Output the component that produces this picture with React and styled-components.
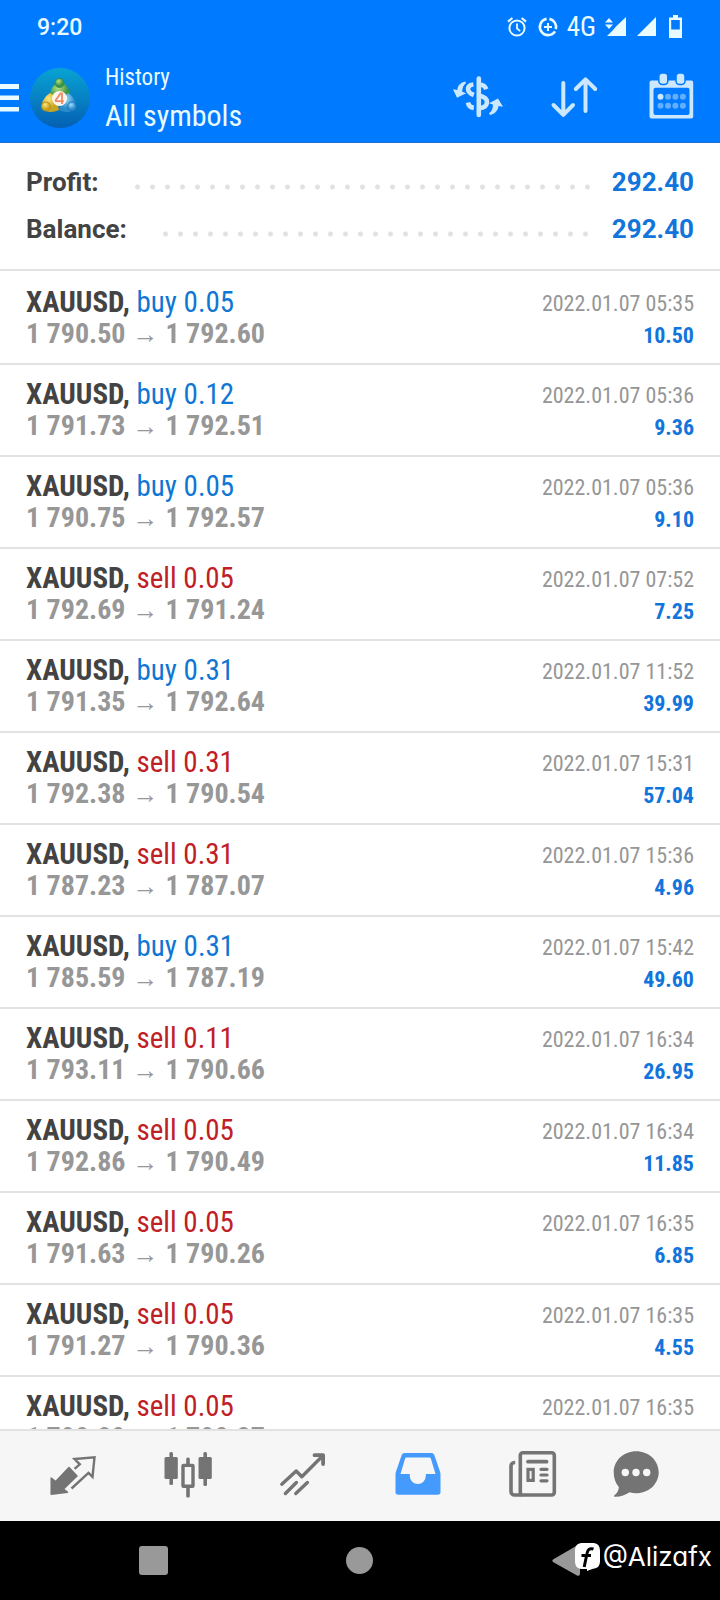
import React from "react";
import styled, { createGlobalStyle } from "styled-components";

const deals = [
  { side: "buy", volume: "0.05", open: "1 790.50", close: "1 792.60", time: "2022.01.07 05:35", profit: "10.50" },
  { side: "buy", volume: "0.12", open: "1 791.73", close: "1 792.51", time: "2022.01.07 05:36", profit: "9.36" },
  { side: "buy", volume: "0.05", open: "1 790.75", close: "1 792.57", time: "2022.01.07 05:36", profit: "9.10" },
  { side: "sell", volume: "0.05", open: "1 792.69", close: "1 791.24", time: "2022.01.07 07:52", profit: "7.25" },
  { side: "buy", volume: "0.31", open: "1 791.35", close: "1 792.64", time: "2022.01.07 11:52", profit: "39.99" },
  { side: "sell", volume: "0.31", open: "1 792.38", close: "1 790.54", time: "2022.01.07 15:31", profit: "57.04" },
  { side: "sell", volume: "0.31", open: "1 787.23", close: "1 787.07", time: "2022.01.07 15:36", profit: "4.96" },
  { side: "buy", volume: "0.31", open: "1 785.59", close: "1 787.19", time: "2022.01.07 15:42", profit: "49.60" },
  { side: "sell", volume: "0.11", open: "1 793.11", close: "1 790.66", time: "2022.01.07 16:34", profit: "26.95" },
  { side: "sell", volume: "0.05", open: "1 792.86", close: "1 790.49", time: "2022.01.07 16:34", profit: "11.85" },
  { side: "sell", volume: "0.05", open: "1 791.63", close: "1 790.26", time: "2022.01.07 16:35", profit: "6.85" },
  { side: "sell", volume: "0.05", open: "1 791.27", close: "1 790.36", time: "2022.01.07 16:35", profit: "4.55" },
  { side: "sell", volume: "0.05", open: "1 790.89", close: "1 790.37", time: "2022.01.07 16:35", profit: "2.60" },
];

const AlarmIcon = () => (
  <svg width="20" height="22" viewBox="0 0 20 22" fill="none" stroke="currentColor" strokeWidth="2">
    <circle cx="10" cy="12" r="7.6" />
    <path d="M10 7.5v5l3.2 2.6" strokeWidth="1.8" />
    <path d="M1 5.6 5.4 2M19 5.6 14.6 2" strokeWidth="2.2" />
  </svg>
);

const DataSaverIcon = () => (
  <svg width="20" height="20" viewBox="0 0 20 20" fill="none" stroke="currentColor">
    <path d="M8.6 1.9A8.2 8.2 0 1 0 17 14.4" strokeWidth="2.6" />
    <path d="M11.4 1.9a8.2 8.2 0 0 1 6.4 10.2" strokeWidth="2.6" />
    <path d="M10 6v8M6 10h8" strokeWidth="2" />
  </svg>
);

const SignalIcon = ({ arrows }) => (
  <svg width={arrows ? 21 : 20} height="20" viewBox={arrows ? "0 0 21 20" : "0 0 20 20"} fill="currentColor">
    {arrows ? (
      <>
        <path d="M21 0v19H2l5.6-5.4L11 9.6Z" />
        <path d="M0 5.6 4 1 8 5.6ZM0 7.400h8L4 12Z" />
      </>
    ) : (
      <path d="M19 0v19H0Z" />
    )}
  </svg>
);

const BatteryIcon = () => (
  <svg width="15" height="24" viewBox="0 0 15 24" fill="currentColor">
    <path fillRule="evenodd" d="M5 0h5v2.500h4V23H1V2.500h4ZM3.200 5v9.500h8.600V5Z" />
  </svg>
);

const MenuIcon = () => (
  <svg width="19" height="28" viewBox="0 0 19 28" fill="currentColor">
    <path d="M0 0h19v5H0ZM0 11.500h19v4.500H0ZM0 23h19v4.500H0Z" />
  </svg>
);

const Logo = () => (
  <svg width="60" height="60" viewBox="0 0 60 60">
    <defs>
      <linearGradient id="sky" x1="0" y1="0" x2="0" y2="1">
        <stop offset="0" stopColor="#08a3d3" />
        <stop offset="1" stopColor="#0560b4" />
      </linearGradient>
      <radialGradient id="green" cx="0.4" cy="0.3">
        <stop offset="0" stopColor="#b5e08a" />
        <stop offset="1" stopColor="#3d9442" />
      </radialGradient>
      <radialGradient id="gold" cx="0.4" cy="0.3">
        <stop offset="0" stopColor="#fbe77a" />
        <stop offset="1" stopColor="#c9a424" />
      </radialGradient>
      <radialGradient id="blue" cx="0.4" cy="0.3">
        <stop offset="0" stopColor="#9fdcf8" />
        <stop offset="1" stopColor="#2a8ccb" />
      </radialGradient>
    </defs>
    <circle cx="30" cy="30" r="30" fill="url(#sky)" />
    <path d="M20 29c0-9 4-14 10-14s10 5 10 14l-10 3Z" fill="url(#green)" />
    <circle cx="29.500" cy="15" r="4.500" fill="url(#green)" stroke="#2c8a4a" strokeWidth="0.8" />
    <path d="M20 25c-6 4-9 10-8 14 3 6 10 6 17 3l-3-14Z" fill="url(#gold)" />
    <circle cx="16" cy="38.500" r="4.500" fill="url(#gold)" stroke="#b08a18" strokeWidth="0.8" />
    <path d="M38 25c6 4 9 10 8 14-3 6-11 6-17 3l3-12Z" fill="url(#blue)" />
    <circle cx="42" cy="38.500" r="4.500" fill="url(#blue)" stroke="#1b6fb5" strokeWidth="0.8" />
    <circle cx="29.500" cy="30.500" r="7.500" fill="#fdf6ef" />
    <path d="M32 36V25.500h-1.500L25.800 32v1.200h8" fill="none" stroke="#ef8a62" strokeWidth="1.800" />
  </svg>
);

const CurrencyIcon = () => (
  <svg width="52" height="48" viewBox="0 0 52 48" fill="none" stroke="currentColor" strokeWidth="4.600">
    <path d="M21.400 10.500C17.500 11 15.800 13 16.100 15.500c.3 2.600 2.400 4.200 5.700 5.500" />
    <path d="M16 28.500c.5 3 2.300 4.900 5.800 5.400" />
    <path d="M26.800 4.500v36.500" strokeLinecap="round" />
    <path d="M27 10.500c4 0 6 1.300 7.300 4.800M27 21.500c5 1.200 8 3 8 6.300 0 4-3 6.200-8 6.500" />
    <g fill="currentColor" stroke="none">
      <path d="M13.500 7.500C8.500 8.500 5.600 11.500 5.300 16L1 15.300 5 23.800l9.200-4.600-4-1.400c0-3.600 1-6.500 3.600-8.600Z" />
      <path d="M38 41c5-1 8-4.500 8.500-9l4.500.8-5-8.300-9 4.800 3.900 1.200c0 4-1 7-3.900 8.800Z" />
    </g>
  </svg>
);

const SortIcon = () => (
  <svg width="48" height="48" viewBox="0 0 48 48" fill="none" stroke="currentColor" strokeWidth="4" strokeLinecap="round" strokeLinejoin="round">
    <path d="M12.300 9v31.500M2.500 31l9.800 9.800L22 31" />
    <path d="M34.500 37V5.500M24.800 15l9.700-9.700L44.200 15" />
  </svg>
);

const CalendarIcon = () => (
  <svg width="48" height="48" viewBox="0 0 48 48">
    <path
      fill="currentColor"
      fillRule="evenodd"
      d="M3.500 6.500h39.700a2 2 0 0 1 2 2v34a2 2 0 0 1-2 2H3.500a2 2 0 0 1-2-2v-34a2 2 0 0 1 2-2ZM7.500 13.800a2 2 0 0 0-2 2V39a2 2 0 0 0 2 2h32a2 2 0 0 0 2-2V15.800a2 2 0 0 0-2-2Z"
    />
    <g fill="currentColor" stroke="#007aff" strokeWidth="1.500">
      <rect x="10.800" y="-1" width="9" height="11.500" rx="3.500" />
      <rect x="28" y="-1" width="9" height="11.500" rx="3.500" />
    </g>
    <circle cx="12.500" cy="22.800" r="3" fill="currentColor" />
    <g fill="#62aeff">
      <circle cx="20" cy="22.800" r="3" />
      <circle cx="27.400" cy="22.800" r="3" />
      <circle cx="34.900" cy="22.800" r="3" />
      <circle cx="12.500" cy="31.800" r="3" />
      <circle cx="20" cy="31.800" r="3" />
      <circle cx="27.400" cy="31.800" r="3" />
      <circle cx="34.900" cy="31.800" r="3" />
    </g>
  </svg>
);

const QuotesIcon = () => (
  <svg width="48" height="48" viewBox="0 0 48 48">
    <path
      fill="currentColor"
      stroke="currentColor"
      strokeWidth="1.500"
      strokeLinejoin="round"
      d="M20 15.500 28 24 14.500 37l4 3.300L2.200 42.200V26l4.500 3.500Z"
    />
    <path
      fill="none"
      stroke="currentColor"
      strokeWidth="2.400"
      d="M22.500 36.500 39.500 20.800l4 4L45.500 5.300 25.500 7l5.300 5.300-5.200 4.500"
    />
  </svg>
);

const ChartsIcon = () => (
  <svg width="48" height="48" viewBox="0 0 48 48" fill="currentColor">
    <rect x="0.500" y="5" width="13.300" height="22" rx="1.500" />
    <rect x="5.400" y="0" width="3.600" height="33" rx="1.500" />
    <rect x="34.500" y="5" width="13.300" height="22" rx="1.500" />
    <rect x="39.400" y="0" width="3.600" height="34" rx="1.500" />
    <rect x="22.200" y="5.500" width="3.600" height="8" rx="1.500" />
    <rect x="22.200" y="34" width="3.600" height="11.500" rx="1.500" />
    <rect x="19" y="13.400" width="10" height="20.800" rx="0.500" fill="none" stroke="currentColor" strokeWidth="3.400" />
  </svg>
);

const TradeIcon = () => (
  <svg width="48" height="48" viewBox="0 0 48 48" fill="none" stroke="currentColor" strokeWidth="3.400" strokeLinecap="round" strokeLinejoin="round">
    <path d="M2.800 32.200 17.200 19l5.600 5.800L43.500 4" />
    <path d="M35.500 3.200h8.600V12" strokeWidth="3.800" />
    <path d="M6.400 41.500 17.400 30.500M16.800 41.500 28.400 30.500" />
  </svg>
);

const HistoryIcon = () => (
  <svg width="48" height="48" viewBox="0 0 48 48" fill="currentColor">
    <path
      fillRule="evenodd"
      d="M10.500 1h27a3 3 0 0 1 2.800 2l6 17.500.2 2V40a2.700 2.700 0 0 1-2.700 2.700H4.200A2.700 2.700 0 0 1 1.500 40V22.500l.2-2L7.700 3a3 3 0 0 1 2.800-2ZM12.500 5.500a1.500 1.500 0 0 0-1.400 1L6.500 22h9.300v2a8 8 0 0 0 16 0v-2h9.700L36.800 6.500a1.500 1.500 0 0 0-1.400-1Z"
    />
  </svg>
);

const NewsIcon = () => (
  <svg width="48" height="48" viewBox="0 0 48 48" fill="none" stroke="currentColor" strokeWidth="3.600">
    <rect x="11.300" y="0.800" width="34" height="42.200" rx="2.500" />
    <path d="M6.200 10.500h-.7a3.500 3.500 0 0 0-3.500 3.500v25.500A3.500 3.500 0 0 0 5.500 43H13" />
    <path d="M19 9.700h18.500" strokeWidth="3.800" strokeLinecap="round" />
    <rect x="19" y="17.400" width="5.200" height="11" strokeWidth="3.200" />
    <path d="M32 17.300h6M32 23h6M32 28.800h6" strokeWidth="3.200" strokeLinecap="round" />
  </svg>
);

const ChatIcon = () => (
  <svg width="48" height="48" viewBox="0 0 48 48" fill="currentColor">
    <path d="M24.200-.8c12.500 0 22.500 9.300 22.500 21s-10 21-22.500 21c-2.300 0-4.500-.3-6.500-.9-4.300 2.600-9.500 4.700-15 4.500C1.600 44.800 1.800 43.900 2.500 43.300c2.800-2.300 4.300-5.300 4.300-8.400C3.600 31.200 1.700 26 1.700 20.200c0-11.700 10-21 22.500-21Z" />
    <g fill="#f6f6f6">
      <circle cx="13.300" cy="20.500" r="3.700" />
      <circle cx="24" cy="20.500" r="3.700" />
      <circle cx="34.700" cy="20.500" r="3.700" />
    </g>
  </svg>
);

const FacebookIcon = () => (
  <svg width="25" height="28" viewBox="0 0 25 28">
    <path d="M8 0h9c5.500 0 8 2.500 8 8v10c0 5-2.500 7.500-7 7.700L12 28v-2H8c-5.500 0-8-2.500-8-8V8c0-5.500 2.500-8 8-8Z" fill="#fff" />
    <path d="M18.500 6c-4-1.200-5.900.8-6.500 4.500L9.200 24M6.500 12.500H16" fill="none" stroke="#000" strokeWidth="3" />
  </svg>
);

const tools = [
  { label: "Currency", icon: CurrencyIcon },
  { label: "Sort", icon: SortIcon },
  { label: "Period", icon: CalendarIcon },
];

const tabs = [
  { label: "Quotes", icon: QuotesIcon },
  { label: "Charts", icon: ChartsIcon },
  { label: "Trade", icon: TradeIcon },
  { label: "History", icon: HistoryIcon, active: true },
  { label: "News", icon: NewsIcon },
  { label: "Messages", icon: ChatIcon },
];

const App = () => {
  return (
    <Screen>
      <GlobalStyle />
      <Header>
        <StatusBar>
          <Clock>9:20</Clock>
          <AlarmIcon />
          <DataSaverIcon />
          <Network>4G</Network>
          <SignalIcon arrows />
          <SignalIcon />
          <BatteryIcon />
        </StatusBar>
        <Toolbar>
          <MenuButton aria-label="Menu">
            <MenuIcon />
            <Logo />
          </MenuButton>
          <Titles>
            <Subtitle>History</Subtitle>
            <Title>All symbols</Title>
          </Titles>
          {tools.map(({ label, icon: Icon }) => (
            <ToolButton key={label} aria-label={label}>
              <Icon />
            </ToolButton>
          ))}
        </Toolbar>
      </Header>

      <Summary>
        <SummaryRow>
          <dt>Profit:</dt>
          <dd>292.40</dd>
        </SummaryRow>
        <SummaryRow>
          <dt>Balance:</dt>
          <dd>292.40</dd>
        </SummaryRow>
      </Summary>

      <DealList>
        {deals.map((deal, index) => (
          <Deal key={index}>
            <div>
              <Symbol>
                XAUUSD,{" "}
                <Side $side={deal.side}>
                  {deal.side} {deal.volume}
                </Side>
              </Symbol>
              <Prices>
                {deal.open}
                <Arrow>→</Arrow>
                {deal.close}
              </Prices>
            </div>
            <Result>
              <Time>{deal.time}</Time>
              <Profit>{deal.profit}</Profit>
            </Result>
          </Deal>
        ))}
      </DealList>

      <TabBar>
        {tabs.map(({ label, icon: Icon, active }) => (
          <Tab key={label} aria-label={label} $active={active}>
            <Icon />
          </Tab>
        ))}
      </TabBar>

      <SystemBar>
        <SystemButton aria-label="Recent apps">
          <svg width="29" height="29" viewBox="0 0 29 29">
            <rect width="29" height="29" rx="3" />
          </svg>
        </SystemButton>
        <SystemButton aria-label="Home">
          <svg width="27" height="27" viewBox="0 0 27 27">
            <circle cx="13.500" cy="13.500" r="13.500" />
          </svg>
        </SystemButton>
        <SystemButton aria-label="Back">
          <svg width="30" height="31" viewBox="0 0 30 31">
            <path d="M1 14.500 25 .5q3-1 3 2v26q0 3-3 2L1 17q-1.500-1.200 0-2.500Z" />
          </svg>
        </SystemButton>
        <Watermark>
          <FacebookIcon />
          @Alizafx
        </Watermark>
      </SystemBar>
    </Screen>
  );
};

const GlobalStyle = createGlobalStyle`
  * {
    box-sizing: border-box;
  }

  body {
    margin: 0;
    background: #fff;
    font-family: "Roboto Condensed", Roboto, sans-serif;
  }

  button {
    padding: 0;
    border: 0;
    background: none;
    color: inherit;
    cursor: pointer;
  }

  svg {
    display: block;
    flex: none;
    overflow: visible;
  }
`;

const Screen = styled.div`
  display: flex;
  flex-direction: column;
  height: 100vh;
`;

const Header = styled.header`
  flex: none;
  background: #007aff;
  color: #e9fbff;
  border-bottom: 1px solid #1a70d2;
`;

const StatusBar = styled.div`
  display: flex;
  align-items: center;
  gap: 11px;
  height: 54px;
  padding: 0 37px;
`;

const Clock = styled.span`
  flex: 1;
  font: 500 23px Roboto, sans-serif;
`;

const Network = styled.span`
  margin: 0 -2px;
  font-size: 27px;
`;

const Toolbar = styled.div`
  display: flex;
  align-items: center;
  height: 88px;
`;

const MenuButton = styled.button`
  display: flex;
  align-items: center;
  gap: 11px;
`;

const Titles = styled.div`
  flex: 1;
  padding: 0 0 3px 15px;
  line-height: 38px;
`;

const Subtitle = styled.div`
  font-size: 23px;
`;

const Title = styled.h1`
  margin: 0;
  font-size: 30px;
  font-weight: 400;
`;

const ToolButton = styled.button`
  display: flex;
  justify-content: center;
  width: 97px;
  color: #cbe8ff;
`;

const Summary = styled.dl`
  flex: none;
  margin: 0;
  padding: 16px 26px;
  border-bottom: 2px solid #e2e2e2;
`;

const SummaryRow = styled.div`
  display: flex;
  align-items: center;
  font: 700 26px/47px Roboto, sans-serif;
  color: #434343;

  /* dotted leader between the label and its value */
  &::before {
    content: "";
    order: 1;
    flex: 1;
    height: 6px;
    margin: 8px 16px 0 31px;
    background: radial-gradient(circle, #e2e2e2 2px, transparent 3px) 0 0 / 15px 6px repeat-x;
  }

  dd {
    order: 2;
    margin: 0;
    color: #1275dc;
  }
`;

const DealList = styled.ul`
  flex: 1;
  min-height: 0;
  margin: 0;
  padding: 2px 0 0;
  list-style: none;
  overflow-y: auto;
  scrollbar-width: none;
`;

const Deal = styled.li`
  display: flex;
  justify-content: space-between;
  padding: 13px 26px;
  line-height: 32px;
  border-bottom: 2px solid #e2e2e2;
`;

const Symbol = styled.div`
  font-size: 29px;
  font-weight: 700;
  color: #434343;
`;

const Side = styled.span`
  font-weight: 400;
  color: ${({ $side }) => ($side === "buy" ? "#1076d4" : "#bf2026")};
`;

const Prices = styled.div`
  font-size: 28px;
  font-weight: 700;
  color: #979797;
`;

const Arrow = styled.span`
  margin: 0 7px;
  font-size: 26px;
  font-weight: 400;
  line-height: 1;
`;

/* the smaller type is pushed down to share the left column's baselines */
const Result = styled.div`
  margin: 2px 0 -2px;
  font-size: 22px;
  text-align: right;
`;

const Time = styled.div`
  color: #969696;
`;

const Profit = styled.div`
  font-weight: 700;
  color: #1275dc;
`;

const TabBar = styled.nav`
  flex: none;
  display: grid;
  grid-template-columns: repeat(5, 115fr) 92fr;
  height: 92px;
  padding: 0 38px 0 15px;
  border-top: 2px solid #e2e2e2;
  background: #f6f6f6;
`;

const Tab = styled.button`
  display: flex;
  align-items: center;
  justify-content: center;
  color: ${({ $active }) => ($active ? "#459bfd" : "#747474")};
`;

const SystemBar = styled.footer`
  position: relative;
  flex: none;
  display: grid;
  grid-template-columns: repeat(3, 1fr);
  height: 79px;
  padding: 0 50px;
  background: #000;
`;

const SystemButton = styled.button`
  display: flex;
  align-items: center;
  justify-content: center;

  svg {
    fill: #999;
  }
`;

const Watermark = styled.div`
  position: absolute;
  right: 8px;
  top: 18px;
  display: flex;
  align-items: center;
  gap: 3px;
  font: 400 26px/36px Inter, sans-serif;
  font-feature-settings: "cv11";
  color: #fff;
`;

export default App;
